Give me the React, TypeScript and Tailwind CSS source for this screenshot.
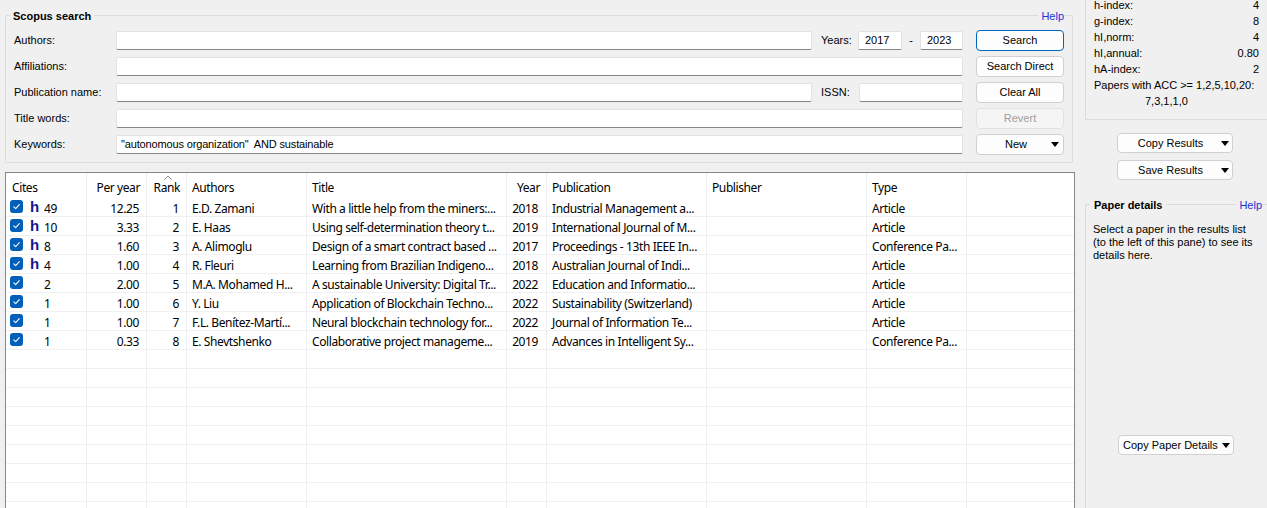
import React from "react";

type Row = {
  h: boolean;
  cites: number;
  perYear: string;
  rank: number;
  authors: string;
  title: string;
  year: number;
  publication: string;
  type: string;
};

const rows: Row[] = [
  { h: true, cites: 49, perYear: "12.25", rank: 1, authors: "E.D. Zamani", title: "With a little help from the miners:...", year: 2018, publication: "Industrial Management a...", type: "Article" },
  { h: true, cites: 10, perYear: "3.33", rank: 2, authors: "E. Haas", title: "Using self-determination theory t...", year: 2019, publication: "International Journal of M...", type: "Article" },
  { h: true, cites: 8, perYear: "1.60", rank: 3, authors: "A. Alimoglu", title: "Design of a smart contract based ...", year: 2017, publication: "Proceedings - 13th IEEE In...", type: "Conference Pa..." },
  { h: true, cites: 4, perYear: "1.00", rank: 4, authors: "R. Fleuri", title: "Learning from Brazilian Indigeno...", year: 2018, publication: "Australian Journal of Indi...", type: "Article" },
  { h: false, cites: 2, perYear: "2.00", rank: 5, authors: "M.A. Mohamed H...", title: "A sustainable University: Digital Tr...", year: 2022, publication: "Education and Informatio...", type: "Article" },
  { h: false, cites: 1, perYear: "1.00", rank: 6, authors: "Y. Liu", title: "Application of Blockchain Techno...", year: 2022, publication: "Sustainability (Switzerland)", type: "Article" },
  { h: false, cites: 1, perYear: "1.00", rank: 7, authors: "F.L. Benítez-Martí...", title: "Neural blockchain technology for...", year: 2022, publication: "Journal of Information Te...", type: "Article" },
  { h: false, cites: 1, perYear: "0.33", rank: 8, authors: "E. Shevtshenko", title: "Collaborative project manageme...", year: 2019, publication: "Advances in Intelligent Sy...", type: "Conference Pa..." },
];

const stats = [
  ["h-index:", "4"],
  ["g-index:", "8"],
  ["hI,norm:", "4"],
  ["hI,annual:", "0.80"],
  ["hA-index:", "2"],
];

function Caret() {
  return (
    <svg width="8" height="5" viewBox="0 0 8 5" className="shrink-0">
      <path d="M0 0H8L4 5Z" fill="#000" />
    </svg>
  );
}

function TextBox({ value, className }: { value?: string; className?: string }) {
  return (
    <div className={"h-[19px] bg-white border border-[#e2e2e2] border-b-[#858585] rounded-[2px] px-[4px] flex items-center text-[11px] text-black whitespace-pre " + (className ?? "")}>
      {value}
    </div>
  );
}

function Btn({ children, kind }: { children: React.ReactNode; kind?: "default" | "disabled" | "menu" }) {
  if (kind === "menu") {
    return (
      <div className="w-[88px] h-[21px] rounded-[4px] border border-[#d0d0d0] bg-[#fdfdfd] flex items-center text-[11px] text-black">
        <span className="flex-1 text-center pl-[4px]">{children}</span>
        <span className="pr-[4px]"><Caret /></span>
      </div>
    );
  }
  return (
    <div
      className={
        kind === "default"
          ? "w-[88px] h-[21px] rounded-[4px] border border-[#0067c0] bg-[#fdfdfd] flex items-center justify-center text-[11px] text-black"
          : kind === "disabled"
          ? "w-[88px] h-[21px] rounded-[4px] border border-[#e2e2e2] bg-[#f5f5f5] flex items-center justify-center text-[11px] text-[#a0a0a0]"
          : "w-[88px] h-[21px] rounded-[4px] border border-[#d0d0d0] bg-[#fdfdfd] flex items-center justify-center text-[11px] text-black"
      }
    >
      {children}
    </div>
  );
}

function Label({ children }: { children: React.ReactNode }) {
  return <div className="w-[102px] shrink-0 text-[11px] text-black">{children}</div>;
}

function SearchBox() {
  return (
    <div className="relative border border-[#dcdcdc] rounded-[2px] mr-[2px] pt-[11px] pb-[5px] pl-[8px] pr-[8px]">
      <span className="absolute left-[4px] -top-[8px] px-[3px] bg-[#f0f0f0] text-[11px] font-bold text-black">Scopus search</span>
      <span className="absolute right-[8px] -top-[8px] pl-[3px] bg-[#f0f0f0] text-[11px] text-[#1a33d6]">Help</span>

      <div className="flex items-center h-[26px]">
        <Label>Authors:</Label>
        <div className="flex-1 flex items-center">
          <TextBox className="flex-1" />
          <span className="ml-[9px] w-[37px] text-[11px]">Years:</span>
          <TextBox value="2017" className="w-[44px] px-[6px]" />
          <span className="w-[18px] text-center text-[11px]">-</span>
          <TextBox value="2023" className="w-[43px] px-[6px]" />
        </div>
        <div className="ml-[13px]"><Btn kind="default">Search</Btn></div>
      </div>

      <div className="flex items-center h-[26px]">
        <Label>Affiliations:</Label>
        <TextBox className="flex-1" />
        <div className="ml-[13px]"><Btn>Search Direct</Btn></div>
      </div>

      <div className="flex items-center h-[26px]">
        <Label>Publication name:</Label>
        <div className="flex-1 flex items-center">
          <TextBox className="flex-1" />
          <span className="ml-[9px] w-[38px] text-[11px]">ISSN:</span>
          <TextBox className="w-[104px]" />
        </div>
        <div className="ml-[13px]"><Btn>Clear All</Btn></div>
      </div>

      <div className="flex items-center h-[26px]">
        <Label>Title words:</Label>
        <TextBox className="flex-1" />
        <div className="ml-[13px]"><Btn kind="disabled">Revert</Btn></div>
      </div>

      <div className="flex items-center h-[26px]">
        <Label>Keywords:</Label>
        <TextBox className="flex-1 tracking-[-0.15px]" value={'"autonomous organization"  AND sustainable'} />
        <div className="ml-[13px]"><Btn kind="menu">New</Btn></div>
      </div>
    </div>
  );
}

function Check() {
  return (
    <div className="w-[13px] h-[13px] rounded-[3px] bg-[#005fb8] flex items-center justify-center shrink-0">
      <svg width="9" height="9" viewBox="0 0 9 9">
        <path d="M1.8 4.8 L3.7 6.6 L7.3 2.6" fill="none" stroke="#fff" strokeWidth="1.1" strokeLinecap="round" strokeLinejoin="round" />
      </svg>
    </div>
  );
}

const grid = "grid grid-cols-[81px_60px_40px_120px_200px_40px_160px_160px_100px_1fr]";
const cell = "border-r border-[#eceef2] whitespace-nowrap overflow-hidden flex items-center";

function ResultsTable() {
  const empty = Array.from({ length: 10 });
  return (
    <div className="mt-[9px] flex-1 bg-white border-l border-t border-r border-[#828790] font-['Noto_Sans',sans-serif] text-[12px] tracking-[-0.4px] text-black">
      <div className={grid + " h-[25px]"}>
        <div className={cell + " pl-[6px] pt-[4px]"}>Cites</div>
        <div className={cell + " justify-end pr-[6px] pt-[4px]"}>Per year</div>
        <div className={cell + " justify-end pr-[6px] pt-[4px] relative"}>
          <svg width="8" height="5" viewBox="0 0 8 5" className="absolute left-[17px] top-[2px]">
            <path d="M0.5 4.5 L4 1 L7.5 4.5" fill="none" stroke="#8a8a8a" strokeWidth="1" />
          </svg>
          Rank
        </div>
        <div className={cell + " pl-[5px] pt-[4px]"}>Authors</div>
        <div className={cell + " pl-[5px] pt-[4px]"}>Title</div>
        <div className={cell + " justify-end pr-[6px] pt-[4px]"}>Year</div>
        <div className={cell + " pl-[5px] pt-[4px]"}>Publication</div>
        <div className={cell + " pl-[5px] pt-[4px]"}>Publisher</div>
        <div className={cell + " pl-[5px] pt-[4px]"}>Type</div>
        <div className="" />
      </div>
      {rows.map((r) => (
        <div key={r.rank} className={grid + " h-[19px] border-b border-[#f0f0f0]"}>
          <div className={cell + " pl-[4px] pt-[4px]"}>
            <div className="-mt-[6px] flex items-center">
              <Check />
              <span className="ml-[7px] w-[14px] font-['Liberation_Sans',sans-serif] font-bold text-[15px] leading-none tracking-normal text-[#141490]">{r.h ? "h" : ""}</span>
            </div>
            <span>{r.cites}</span>
          </div>
          <div className={cell + " justify-end pr-[7px] pt-[4px]"}>{r.perYear}</div>
          <div className={cell + " justify-end pr-[7px] pt-[4px]"}>{r.rank}</div>
          <div className={cell + " pl-[5px] pt-[4px]"}>{r.authors}</div>
          <div className={cell + " pl-[5px] pt-[4px]"}>{r.title}</div>
          <div className={cell + " justify-end pr-[8px] pt-[4px]"}>{r.year}</div>
          <div className={cell + " pl-[5px] pt-[4px]"}>{r.publication}</div>
          <div className={cell + " pl-[5px]"} />
          <div className={cell + " pl-[5px] pt-[4px]"}>{r.type}</div>
          <div />
        </div>
      ))}
      {empty.map((_, i) => (
        <div key={i} className={grid + " h-[19px] border-b border-[#f0f0f0]"}>
          <div className={cell} />
          <div className={cell} />
          <div className={cell} />
          <div className={cell} />
          <div className={cell} />
          <div className={cell} />
          <div className={cell} />
          <div className={cell} />
          <div className={cell} />
          <div />
        </div>
      ))}
    </div>
  );
}

function SideButton({ children, left }: { children: React.ReactNode; left?: boolean }) {
  return (
    <div className="ml-[32px] w-[116px] h-[20px] rounded-[4px] border border-[#d0d0d0] bg-[#fdfdfd] flex items-center text-[11px] text-black">
      <span className={left ? "flex-1 pl-[4px]" : "flex-1 text-center pl-[2px]"}>{children}</span>
      <span className="pr-[3px]"><Caret /></span>
    </div>
  );
}

function SidePanel() {
  return (
    <div className="flex-1 flex flex-col">
      <div className="-mt-[3px] border-l border-b border-[#dcdcdc] pl-[8px] pr-[8px] pb-[10px] text-[11px] text-black">
        {stats.map(([k, v]) => (
          <div key={k} className="h-[16px] flex items-center justify-between">
            <span>{k}</span>
            <span>{v}</span>
          </div>
        ))}
        <div className="h-[16px] flex items-center whitespace-nowrap">Papers with ACC &gt;= 1,2,5,10,20:</div>
        <div className="h-[16px] flex items-center pl-[51px]">7,3,1,1,0</div>
      </div>

      <div className="mt-[13px]"><SideButton>Copy Results</SideButton></div>
      <div className="mt-[7px]"><SideButton>Save Results</SideButton></div>

      <div className="relative mt-[24px] flex-1 border-l border-t border-[#dcdcdc] pl-[7px] pt-[18px] text-[11px] text-black">
        <span className="absolute left-[4px] -top-[8px] px-[4px] bg-[#f0f0f0] font-bold">Paper details</span>
        <span className="absolute right-[5px] -top-[8px] pl-[3px] bg-[#f0f0f0] text-[#1a33d6]">Help</span>
        <div className="leading-[13px]">
          Select a paper in the results list
          <br />
          (to the left of this pane) to see its
          <br />
          details here.
        </div>
        <div className="mt-[173px] -ml-[7px]"><SideButton left>Copy Paper Details</SideButton></div>
      </div>
    </div>
  );
}

export default function App() {
  return (
    <div className="w-[1267px] h-[508px] overflow-hidden bg-[#f0f0f0] flex font-['Liberation_Sans',Arial,sans-serif]">
      <div className="w-[1080px] shrink-0 pl-[5px] pr-[5px] pt-[15px] flex flex-col">
        <SearchBox />
        <ResultsTable />
      </div>
      <div className="w-[5px] shrink-0" />
      <SidePanel />
    </div>
  );
}
